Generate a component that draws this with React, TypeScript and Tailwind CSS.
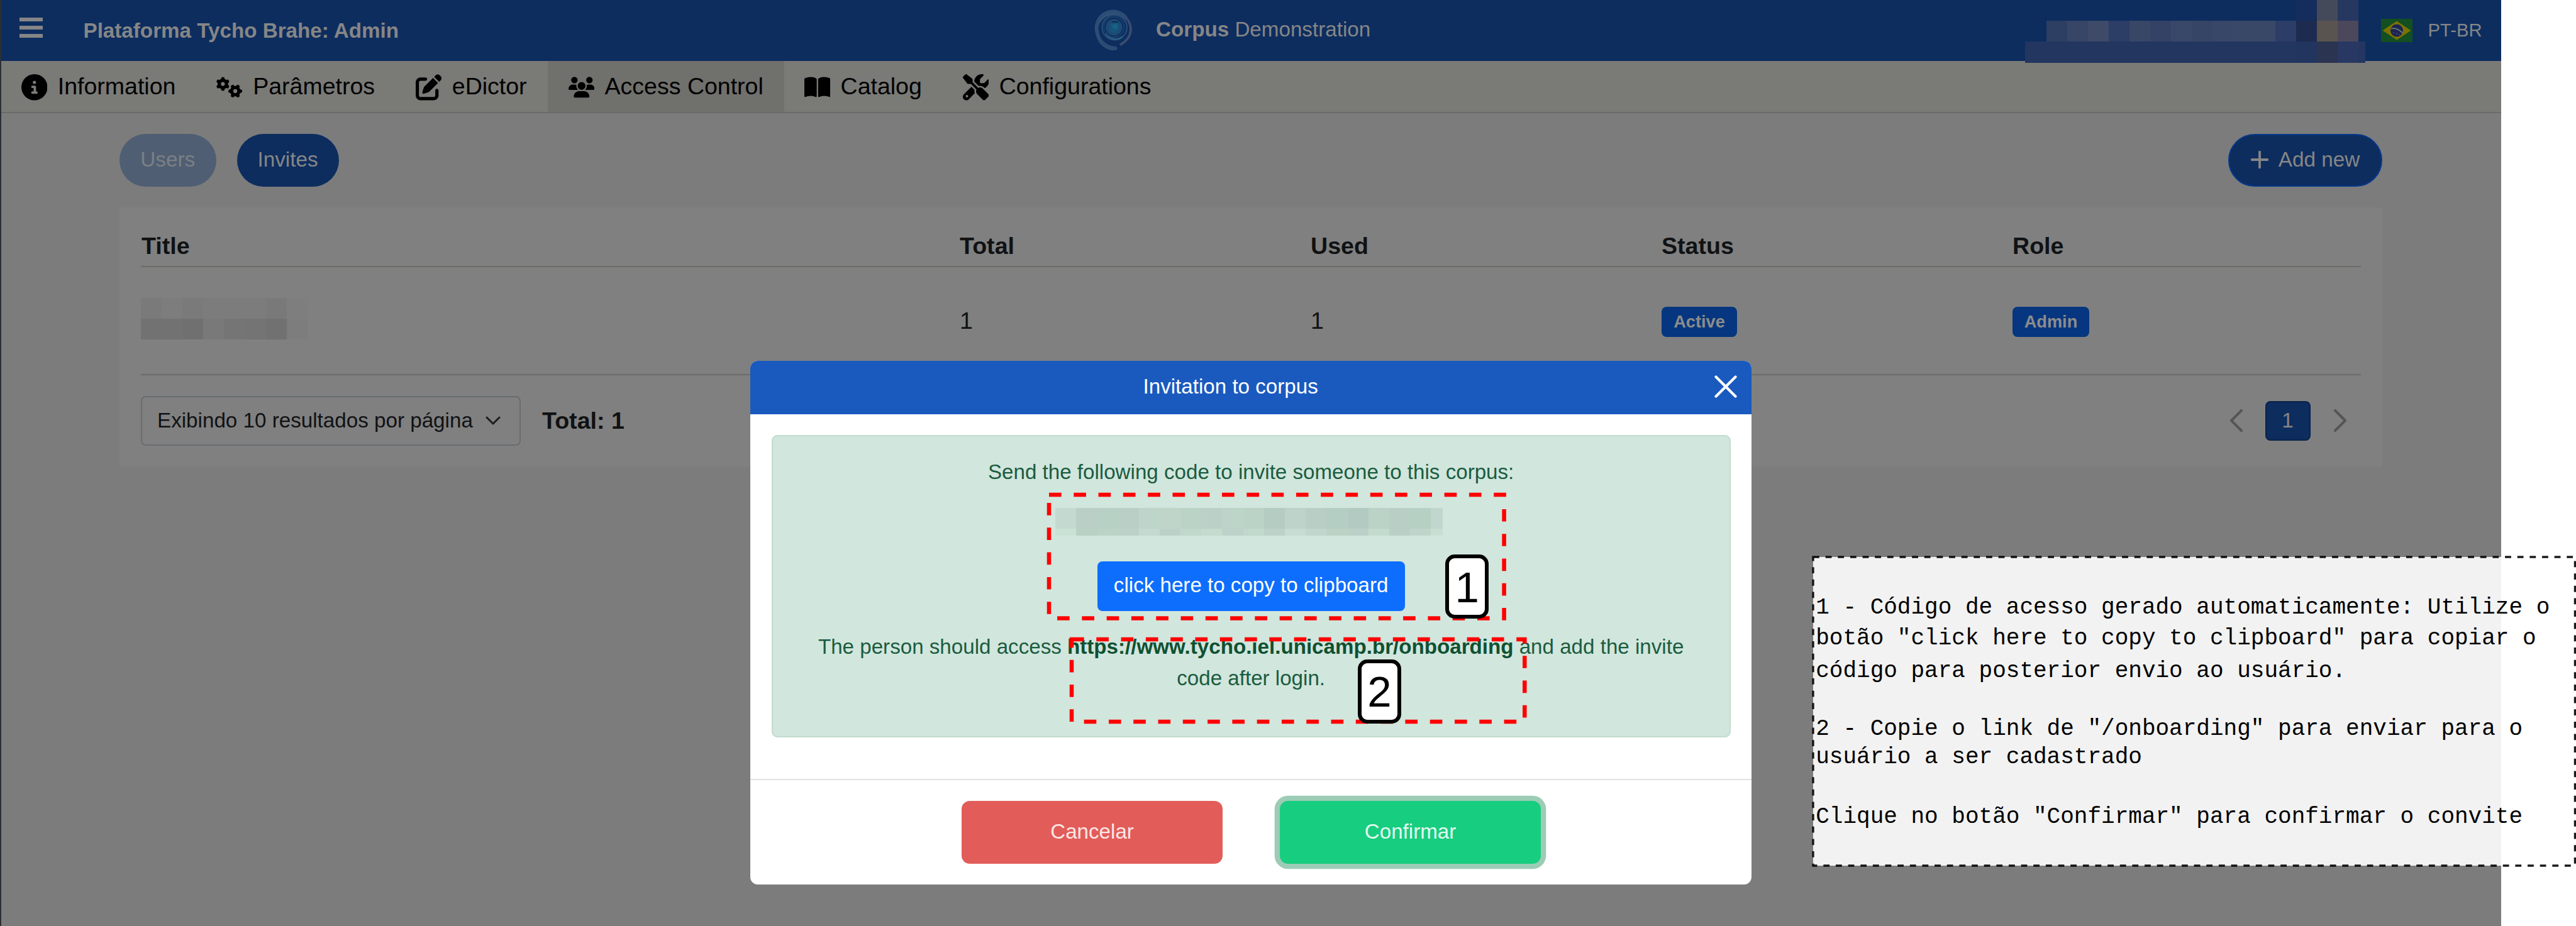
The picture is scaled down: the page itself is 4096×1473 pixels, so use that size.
import React from "react";
import {
  FaBookOpen,
  FaCircleInfo,
  FaGears,
  FaPenToSquare,
  FaScrewdriverWrench,
  FaUsers,
} from "react-icons/fa6";

const navItems = [
  { label: "Information", Icon: FaCircleInfo },
  { label: "Parâmetros", Icon: FaGears },
  { label: "eDictor", Icon: FaPenToSquare },
  { label: "Access Control", Icon: FaUsers, active: true },
  { label: "Catalog", Icon: FaBookOpen },
  { label: "Configurations", Icon: FaScrewdriverWrench },
];

function Mosaic({ rows, widths, heights }: { rows: string[][]; widths: number[]; heights: number[] }) {
  return (
    <div className="flex flex-col">
      {rows.map((row, r) => (
        <div key={r} className="flex" style={{ height: heights[r] }}>
          {row.map((c, i) => (
            <div key={i} className="h-full shrink-0" style={{ width: widths[i], background: c }} />
          ))}
        </div>
      ))}
    </div>
  );
}

const T = "transparent";

const userRows = [
  [T, T, T, T, T, T, T, T, T, T, T, T, T, "#152d5d", "#454a5a", "#263860", T],
  [T, "#2d3f62", "#374667", "#3e4a67", "#2c3d66", "#384766", "#344266", "#394768", "#364565", "#384668", "#394867", "#394867", "#2c3d67", "#1c2b4f", "#5a5450", "#4c485b", T],
  ["#233660", "#233660", "#233660", "#233660", "#233660", "#233660", "#233660", "#233660", "#233660", "#233660", "#233660", "#233660", "#233660", "#21355f", "#2b3450", "#293862", "#243661"],
];
const userWidths = [33.5, 33.1, 33.1, 33.1, 33.1, 33.1, 33.1, 33.1, 33.1, 33.1, 33.1, 33.1, 33.1, 33.1, 33.1, 33.1, 11.3];

const titleRows = [
  ["#7a7a7a", "#7d7d7d", "#7a7a7a", "#7c7c7c", "#7c7c7c", "#7c7c7c", "#797979", "#7e7e7e"],
  ["#727272", "#727272", "#707070", "#797979", "#757575", "#747474", "#717171", "#7d7d7d"],
];

const codeRows = [
  ["#c4dad1", "#bad0c6", "#b8d1c5", "#bacfc6", "#bed6ca", "#bfd5ca", "#bbd3c6", "#bbd1c8", "#bdd4c9", "#bbd2c6", "#b4ccc1", "#bed4ca", "#b9cfc6", "#b5cec3", "#b2cac1", "#bbd2c6", "#b9cec5", "#b7d0c4", "#c1d7cd"],
  ["#cae2d5", "#b9d1c4", "#bbd2c6", "#bcd2c8", "#c4dad1", "#bcd2c8", "#c0d8cb", "#c4dbce", "#bdd3c9", "#c1d8cd", "#bdd2c9", "#c7ddd3", "#c1d7ce", "#bbd2c5", "#bbd1c7", "#c3dbcd", "#bad0c6", "#bfd5ca", "#c7dfd2"],
];

function Logo() {
  return (
    <svg className="h-[68px] w-[66px] shrink-0" viewBox="53 50 248 250" fill="none">
      <path d="M262 108a104 104 0 0 0-184 62" stroke="#3d5676" strokeWidth="16" />
      <path d="M250 94a98 98 0 0 0-168 92c8 50 50 92 108 94" stroke="#2c4d76" strokeWidth="22" strokeLinecap="round" />
      <path d="M120 238c22 22 46 32 72 30l-14 26c-36-4-72-26-92-60z" fill="#2b4b73" />
      <path d="M248 92c46 44 54 118-30 168" stroke="#36496e" strokeWidth="15" />
      <path d="M270 116c32 60 4 114-50 144" stroke="#42506f" strokeWidth="5" />
      <circle cx="185" cy="155" r="74" stroke="#24507a" strokeWidth="8" />
      <path d="M134 190a66 66 0 0 0 100 20" stroke="#2c5880" strokeWidth="12" />
      <circle cx="182" cy="152" r="60" stroke="#1b4371" strokeWidth="6" />
      <circle cx="182" cy="154" r="46" fill="#1b4874" stroke="#24507a" strokeWidth="5" />
      <path d="M154 132l56-10 6 44-30 28-32-18z" fill="#185379" />
      <circle cx="188" cy="150" r="15" fill="#176288" />
      <path d="M170 122h38" stroke="#0d2542" strokeWidth="6" />
    </svg>
  );
}

function Flag() {
  return (
    <svg className="h-[37px] w-[50px] shrink-0" viewBox="0 0 50 37">
      <rect width="50" height="37" fill="#134f20" />
      <path d="M25 3.5L47.5 18.5 25 33.5 2.5 18.5z" fill="#7c7200" />
      <circle cx="25" cy="18.5" r="10" fill="#1c2454" />
      <path d="M16 15.5c7-1.500 13 1.500 18.500 7" stroke="#6c7f72" strokeWidth="1.700" fill="none" />
      <path d="M20 21v2M25 22v3M29 24v2" stroke="#4a5278" strokeWidth="1.200" />
    </svg>
  );
}

function Header() {
  return (
    <header className="relative flex h-[97px] shrink-0 items-center bg-[#0d2d5f] text-[#868686]">
      <div className="ml-[29px] flex w-[37px] flex-col gap-[7px] pb-[10px]">
        <div className="h-[6px] bg-[#868686]" />
        <div className="h-[6px] bg-[#868686]" />
        <div className="h-[6px] bg-[#868686]" />
      </div>
      <div className="ml-[64.500px] w-[1604.500px] text-[33.2px] font-bold">Plataforma Tycho Brahe: Admin</div>
      <Logo />
      <div className="ml-[35px] -translate-y-[2px] text-[33.2px]">
        <b>Corpus</b> Demonstration
      </div>
      <div className="ml-auto flex items-center pr-[30.500px]">
        <Flag />
        <div className="ml-[24.500px] text-[29.2px]">PT-BR</div>
      </div>
      <div className="absolute left-[3218px] top-0 z-10">
        <Mosaic rows={userRows} widths={userWidths} heights={[33, 33.300, 33.300]} />
      </div>
    </header>
  );
}

function Nav() {
  return (
    <nav className="flex h-[83px] shrink-0 border-b-[2px] border-[#696967] bg-[#7a7a77] pr-4 text-black">
      {navItems.map(({ label, Icon, active }) => (
        <div
          key={label}
          className={
            active
              ? "flex items-center gap-[16.500px] bg-[#70706d] px-[33px]"
              : "flex items-center gap-[16.500px] pl-[31.800px] pr-[33px]"
          }
        >
          <Icon className="mt-[3px] size-[41.5px]" />
          <span className="text-[37.5px]">{label}</span>
        </div>
      ))}
    </nav>
  );
}

const columns = "grid grid-cols-[1302px_558px_558px_558px_1fr]";

function Card() {
  return (
    <section className="mt-[33px] flex h-[412px] flex-col bg-[#808080] px-[34px] text-[#101214]">
      <div className={columns + " h-[95.5px] shrink-0 items-end border-b-[2px] border-[#6b6b68] pb-[3.500px] text-[37.6px] font-bold"}>
        <div className="pl-[1px]">Title</div>
        <div>Total</div>
        <div>Used</div>
        <div>Status</div>
        <div>Role</div>
      </div>
      <div className={columns + " h-[171.500px] shrink-0 items-center border-b-[2px] border-[#6b6b6b] text-[37.6px]"}>
        <div className="-mt-[6px]">
          <Mosaic rows={titleRows} widths={[33.100, 33.100, 33.100, 33.100, 33.100, 33.100, 33.100, 33.100]} heights={[33, 33]} />
        </div>
        <div>1</div>
        <div>1</div>
        <div className="mt-[5px] flex">
          <span className="flex h-[48px] w-[120px] items-center justify-center rounded-[8px] bg-[#06367f] text-[27.2px] font-bold text-[#8c8c8c]">Active</span>
        </div>
        <div className="mt-[5px] flex">
          <span className="flex h-[48px] w-[122px] items-center justify-center rounded-[8px] bg-[#06367f] text-[27.2px] font-bold text-[#8c8c8c]">Admin</span>
        </div>
      </div>
      <div className="mt-[33px] flex h-[79px] items-center">
        <div className="flex h-[79px] w-[604px] items-center justify-between rounded-[8px] border-[2px] border-[#696c6f] pl-[24px] pr-[30px] text-[33.2px]">
          <span>Exibindo 10 resultados por página</span>
          <svg className="h-[14px] w-[24px]" viewBox="0 0 24 14" fill="none">
            <path d="M2 2l10 10L22 2" stroke="#1a1c1e" strokeWidth="3" strokeLinecap="round" strokeLinejoin="round" />
          </svg>
        </div>
        <div className="ml-[34px] text-[37.6px] font-bold">Total: 1</div>
        <div className="ml-auto flex items-center pr-[22.500px]">
          <svg className="h-[36px] w-[21px]" viewBox="0 0 21 36" fill="none">
            <path d="M19 2L3 18l16 16" stroke="#555" strokeWidth="4" strokeLinecap="round" strokeLinejoin="round" />
          </svg>
          <div className="ml-[36px] mr-[37px] flex h-[63px] w-[72px] items-center justify-center rounded-[8px] border-[2px] border-[#0a2348] bg-[#0d2d5f] text-[33.3px] text-[#868686]">1</div>
          <svg className="h-[36px] w-[21px]" viewBox="0 0 21 36" fill="none">
            <path d="M2 2l16 16L2 34" stroke="#555" strokeWidth="4" strokeLinecap="round" strokeLinejoin="round" />
          </svg>
        </div>
      </div>
    </section>
  );
}

function NumberTag({ n }: { n: number }) {
  return (
    <div className="flex h-[101.500px] w-[69px] items-center justify-center rounded-[15px] border-[6.500px] border-black bg-white pt-[2px] text-[69px] leading-none text-black">
      {n}
    </div>
  );
}

function DashedBox({ w, h }: { w: number; h: number }) {
  return (
    <svg className="overflow-visible" width={w} height={h} fill="none">
      <rect width={w} height={h} stroke="#ff0000" strokeWidth="6.548" strokeDasharray="19.645 19.645" />
    </svg>
  );
}

function Modal() {
  return (
    <div className="flex h-[833.500px] w-[1591.700px] flex-col overflow-hidden rounded-[12px] bg-white text-[33.15px]">
      <div className="relative flex h-[85px] shrink-0 items-center justify-center bg-[#1a5abf] text-white">
        <div className="pb-[2px] pr-[65px]">Invitation to corpus</div>
        <svg className="absolute right-[23px] top-[23.500px] h-[36px] w-[36px]" viewBox="0 0 36 36">
          <path d="M2.500 2.500l31 31M33.500 2.500l-31 31" stroke="#fff" strokeWidth="4.200" strokeLinecap="round" />
        </svg>
      </div>
      <div className="mx-[33.400px] mt-[33px] flex h-[481px] shrink-0 flex-col items-center rounded-[9px] border-[2px] border-[#c1dccf] bg-[#d1e6dd] text-[#1b5c3f]">
        <div className="mt-[32px] h-[50px] leading-[50px]">Send the following code to invite someone to this corpus:</div>
        <div className="mt-[32px] pr-[6px]">
          <Mosaic
            rows={codeRows}
            widths={[33.200, 33.200, 33.200, 33.200, 33.200, 33.200, 33.200, 33.200, 33.200, 33.200, 33.200, 33.200, 33.200, 33.200, 33.200, 33.200, 33.200, 33.200, 19]}
            heights={[33, 11]}
          />
        </div>
        <div className="mt-[41px] flex h-[79px] w-[489px] items-center justify-center rounded-[8px] bg-[#0d6efd] pb-[2px] text-white">
          click here to copy to clipboard
        </div>
        <div className="mt-[32.500px] whitespace-nowrap text-center leading-[50px]">
          The person should access <b className="text-[#0f5132]">https://www.tycho.iel.unicamp.br/onboarding</b> and add the invite
          <br />
          code after login.
        </div>
      </div>
      <div className="mt-[66px] flex h-[167px] shrink-0 items-start gap-[91px] border-t-[2px] border-[#dfe3e6] pl-[336px] pt-[33px]">
        <div className="flex h-[100px] w-[414.500px] items-center justify-center rounded-[13px] bg-[#e25c59] pb-[2px] text-[#fbe7e6]">Cancelar</div>
        <div className="flex h-[100px] w-[415.500px] items-center justify-center rounded-[13px] bg-[#17cd7f] pb-[2px] text-[#e4faf0] ring-[8.300px] ring-[#9dccb6]">Confirmar</div>
      </div>
    </div>
  );
}

function Note() {
  return (
    <div className="relative h-[491px] w-[1211.400px] bg-white/90 pt-[58.900px] text-black">
      <svg className="absolute left-0 top-0 overflow-visible" width="1211.400" height="491" fill="none">
        <rect width="1211.400" height="491" stroke="#000" strokeOpacity="0.9" strokeWidth="3.274" strokeDasharray="9.822 9.822" />
      </svg>
      <div className="whitespace-nowrap pl-[4.500px] font-['Liberation_Mono',monospace] text-[36.02px] leading-[45px]">
        <p>1 - Código de acesso gerado automaticamente: Utilize o</p>
        <p className="mt-[3.200px]">botão "click here to copy to clipboard" para copiar o</p>
        <p className="mt-[7.700px]">código para posterior envio ao usuário.</p>
        <p className="mt-[46.300px]">2 - Copie o link de "/onboarding" para enviar para o</p>
        <p className="mt-[0.800px]">usuário a ser cadastrado</p>
        <p className="mt-[49.800px]">Clique no botão "Confirmar" para confirmar o convite</p>
      </div>
    </div>
  );
}

export default function App() {
  return (
    <div className="relative h-[1473px] w-[4096px] overflow-hidden bg-white font-['Liberation_Sans',Arial,sans-serif]">
      <div className="flex h-full w-[3977px] flex-col border-l-[2px] border-[#2b2f36] bg-[#7c7c7c]">
        <Header />
        <Nav />
        <main className="flex flex-col pl-[188px] pr-[189px]">
          <div className="mt-[33px] flex h-[83.500px] items-center text-[33.3px]">
            <div className="flex h-full w-[153.500px] items-center justify-center rounded-full bg-[#4f5e73] pb-[2px] text-[#7b7f84]">Users</div>
            <div className="ml-[33px] flex h-full w-[162px] items-center justify-center rounded-full bg-[#0d2d5f] pb-[2px] text-[#868686]">Invites</div>
            <div className="ml-auto flex h-full w-[245px] items-center justify-center gap-[16px] rounded-full border-[2px] border-[#07398a] bg-[#0d2d5f] pb-[2px] text-[#868686]">
              <svg className="h-[28px] w-[28px]" viewBox="0 0 28 28">
                <path d="M14 1.500v25M1.500 14h25" stroke="#868686" strokeWidth="3.800" strokeLinecap="round" />
              </svg>
              Add new
            </div>
          </div>
          <Card />
        </main>
      </div>

      <div className="absolute left-[1193.300px] top-[573.800px]">
        <Modal />
      </div>

      <div className="absolute left-[1668.100px] top-[787.400px]">
        <DashedBox w={723.600} h={196.400} />
      </div>
      <div className="absolute left-[1704.100px] top-[1016.600px]">
        <DashedBox w={720.300} h={131} />
      </div>
      <div className="absolute left-[2298.300px] top-[882.300px]">
        <NumberTag n={1} />
      </div>
      <div className="absolute left-[2159px] top-[1049.200px]">
        <NumberTag n={2} />
      </div>
      <div className="absolute left-[2882.700px] top-[885.600px]">
        <Note />
      </div>
    </div>
  );
}
